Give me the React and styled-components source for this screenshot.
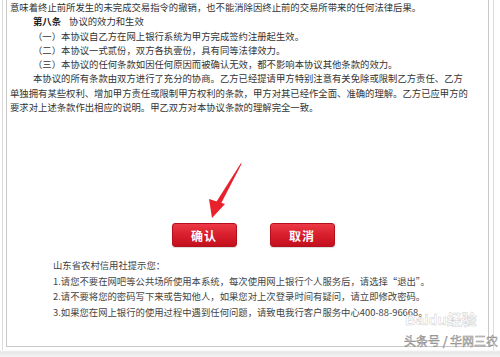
import React from "react";
import styled, { createGlobalStyle } from "styled-components";

const Global = createGlobalStyle`
  html, body { margin: 0; padding: 0; background: #ffffff; }
  body { width: 500px; height: 357px; overflow: hidden; font-family: "Noto Sans CJK SC", "Liberation Sans", sans-serif; }
`;

const Page = styled.div`
  position: relative;
  width: 500px;
  height: 357px;
  overflow: hidden;
  background: linear-gradient(#ffffff 0, #ffffff 350px, #e6e6e6 352px, #f4f4f4 357px);
`;

const Frame = styled.div`
  margin-left: 2px;
  width: 490px;
  height: 350px;
  border-left: 1px solid #dcdcdc;
  border-right: 1px solid #dcdcdc;
  background: #fff;
  box-sizing: content-box;
`;

const Content = styled.div`
  margin-left: 3px;
  width: 483px;
  height: 347px;
  border: 1px solid #c8c8c8;
  border-top: none;
  box-sizing: border-box;
  overflow: hidden;
`;

const Agreement = styled.div`
  padding-left: 3px;
  font-size: 9.35px;
  line-height: 14.3px;
  color: #333;
`;

const Line = styled.div`
  white-space: nowrap;
  padding-left: ${(p) => (p.$indent ? "23px" : "0")};
`;

const Strong = styled.b`
  font-weight: 700;
  color: #222;
  margin-right: 8px;
`;

const ButtonRow = styled.div`
  display: flex;
  justify-content: center;
  gap: 33px;
  margin-top: 109px;
  padding-left: 11px;
`;

const Button = styled.button`
  width: 65px;
  height: 24px;
  border: 1px solid #b50f1c;
  border-radius: 3px;
  background: linear-gradient(#ec3a45 0%, #d81e2c 50%, #c3101e 100%);
  color: #fff;
  font-family: "Noto Sans CJK SC", sans-serif;
  font-size: 12px;
  font-weight: 700;
  letter-spacing: 1px;
  padding: 0;
  box-shadow: 0 1px 1px rgba(0,0,0,0.15);
`;

const Tips = styled.div`
  margin-top: 11px;
  padding-left: 46px;
  font-size: 9.35px;
  line-height: 15.5px;
  color: #444;
`;

const Arrow = styled.svg`
  position: absolute;
  left: 200px;
  top: 160px;
`;

const Baidu = styled.div`
  position: absolute;
  left: 405px;
  top: 311px;
  font-family: "Liberation Sans", "Noto Sans CJK SC", sans-serif;
  font-size: 15px;
  line-height: 18px;
  font-weight: 700;
  color: rgba(255,255,255,0.9);
  -webkit-text-stroke: 0.5px rgba(170,170,170,0.6);
  white-space: nowrap;
`;

const Toutiao = styled.div`
  position: absolute;
  left: 404px;
  top: 333px;
  font-size: 12px;
  line-height: 15px;
  color: rgba(255,255,255,0.95);
  -webkit-text-stroke: 0.5px rgba(90,90,90,0.8);
  white-space: nowrap;
`;

export default function App() {
  return (
    <Page>
      <Global />
      <Frame>
        <Content>
          <Agreement>
            <Line>意味着终止前所发生的未完成交易指令的撤销，也不能消除因终止前的交易所带来的任何法律后果。</Line>
            <Line $indent><Strong>第八条</Strong>协议的效力和生效</Line>
            <Line $indent>（一）本协议自乙方在网上银行系统为甲方完成签约注册起生效。</Line>
            <Line $indent>（二）本协议一式贰份，双方各执壹份，具有同等法律效力。</Line>
            <Line $indent>（三）本协议的任何条款如因任何原因而被确认无效，都不影响本协议其他条款的效力。</Line>
            <Line $indent>本协议的所有条款由双方进行了充分的协商。乙方已经提请甲方特别注意有关免除或限制乙方责任、乙方</Line>
            <Line>单独拥有某些权利、增加甲方责任或限制甲方权利的条款，甲方对其已经作全面、准确的理解。乙方已应甲方的</Line>
            <Line>要求对上述条款作出相应的说明。甲乙双方对本协议条款的理解完全一致。</Line>
          </Agreement>
          <ButtonRow>
            <Button>确认</Button>
            <Button>取消</Button>
          </ButtonRow>
          <Tips>
            <Line>山东省农村信用社提示您：</Line>
            <Line>1.请您不要在网吧等公共场所使用本系统，每次使用网上银行个人服务后，请选择“退出”。</Line>
            <Line>2.请不要将您的密码写下来或告知他人，如果您对上次登录时间有疑问，请立即修改密码。</Line>
            <Line>3.如果您在网上银行的使用过程中遇到任何问题，请致电我行客户服务中心400-88-96668。</Line>
          </Tips>
        </Content>
      </Frame>
      <Arrow width="50" height="62" viewBox="0 0 50 62">
        <path d="M41 3 L15 44 L19.5 46.5 L41.5 4 Z" fill="#e8222c" />
        <path d="M9 39 L12 58 L25 44 Z" fill="#e8222c" />
      </Arrow>
      <Baidu>Baidu经验</Baidu>
      <Toutiao>头条号 / 华网三农</Toutiao>
    </Page>
  );
}
